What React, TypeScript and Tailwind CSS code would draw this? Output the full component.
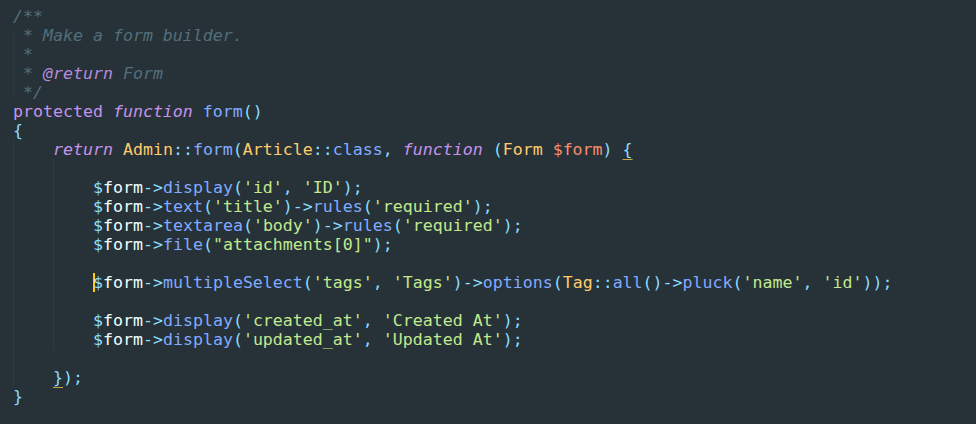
import React from "react";

type Tok = [string, string];

const P = "text-[#89DDFF]";
const K = "text-[#C792EA]";
const KI = "text-[#C792EA] italic";
const F = "text-[#82AAFF]";
const C = "text-[#FFCB6B]";
const S = "text-[#C3E88D]";
const V = "text-[#EEFFFF]";
const R = "text-[#F78C6C]";
const G = "text-[#546E7A] italic";
const N = "text-[#EEFFFF]";

function Guide() {
  return <span className="inline-block h-[19px] align-top w-[40px] border-l border-dotted border-[#33434b]" />;
}

function formCall(method: string, args: Tok[]): Tok[] {
  return [
    ["$", P],
    ["form", V],
    ["->", P],
    [method, F],
    ["(", P],
    ...args,
  ];
}

const Line = ({ guides = 0, children }: { guides?: number; children?: React.ReactNode }) => (
  <div className="h-[19px] whitespace-pre flex items-start">
    {Array.from({ length: guides }).map((_, i) => (
      <Guide key={i} />
    ))}
    <span className="leading-[19px]">{children}</span>
  </div>
);

const Toks = ({ toks }: { toks: Tok[] }) => (
  <>
    {toks.map(([t, c], i) => (
      <span key={i} className={c}>
        {t}
      </span>
    ))}
  </>
);

const CommentGuide = () => (
  <span className="inline-block h-[19px] w-[10px] border-l border-dotted border-[#2e3d45]" />
);

export default function App() {
  return (
    <div
      className="w-[976px] h-[424px] bg-[#263238] overflow-hidden pl-[13px] pt-[7px] text-[16.6px] leading-[19px]"
      style={{ fontFamily: '"DejaVu Sans Mono", monospace' }}
    >
      <Line>
        <span className={G}>/**</span>
      </Line>
      <div className="h-[19px] whitespace-pre flex">
        <CommentGuide />
        <span className={G}>* Make a form builder.</span>
      </div>
      <div className="h-[19px] whitespace-pre flex">
        <CommentGuide />
        <span className={G}>*</span>
      </div>
      <div className="h-[19px] whitespace-pre flex">
        <CommentGuide />
        <span className={G}>* </span>
        <span className="text-[#b48bdc] italic">@return</span>
        <span className={G}> Form</span>
      </div>
      <div className="h-[19px] whitespace-pre flex">
        <CommentGuide />
        <span className={G}>*/</span>
      </div>
      <Line>
        <Toks
          toks={[
            ["protected", K],
            [" ", N],
            ["function", KI],
            [" ", N],
            ["form", F],
            ["()", P],
          ]}
        />
      </Line>
      <Line>
        <span className={P}>{"{"}</span>
      </Line>
      <Line guides={1}>
        <Toks
          toks={[
            ["return", KI],
            [" ", N],
            ["Admin", C],
            ["::", P],
            ["form", F],
            ["(", P],
            ["Article", C],
            ["::", P],
            ["class", F],
            [",", P],
            [" ", N],
            ["function", KI],
            [" ", N],
            ["(", P],
            ["Form", C],
            [" ", N],
            ["$form", R],
            [")", P],
            [" ", N],
          ]}
        />
        <span className={P + " underline decoration-[#c9a23e] underline-offset-[4px]"}>{"{"}</span>
      </Line>
      <Line guides={2} />
      <Line guides={2}>
        <Toks toks={formCall("display", [["'id'", S], [",", P], [" ", N], ["'ID'", S], [");", P]])} />
      </Line>
      <Line guides={2}>
        <Toks
          toks={formCall("text", [
            ["'title'", S],
            [")->", P],
            ["rules", F],
            ["(", P],
            ["'required'", S],
            [");", P],
          ])}
        />
      </Line>
      <Line guides={2}>
        <Toks
          toks={formCall("textarea", [
            ["'body'", S],
            [")->", P],
            ["rules", F],
            ["(", P],
            ["'required'", S],
            [");", P],
          ])}
        />
      </Line>
      <Line guides={2}>
        <Toks toks={formCall("file", [['"attachments[0]"', S], [");", P]])} />
      </Line>
      <Line guides={2} />
      <Line guides={2}>
        <span className="inline-block w-[2px] h-[19px] align-top bg-[#FFCC00] mr-[-2px]" />
        <Toks
          toks={formCall("multipleSelect", [
            ["'tags'", S],
            [",", P],
            [" ", N],
            ["'Tags'", S],
            [")->", P],
            ["options", F],
            ["(", P],
            ["Tag", C],
            ["::", P],
            ["all", F],
            ["()->", P],
            ["pluck", F],
            ["(", P],
            ["'name'", S],
            [",", P],
            [" ", N],
            ["'id'", S],
            ["));", P],
          ])}
        />
      </Line>
      <Line guides={2} />
      <Line guides={2}>
        <Toks
          toks={formCall("display", [
            ["'created_at'", S],
            [",", P],
            [" ", N],
            ["'Created At'", S],
            [");", P],
          ])}
        />
      </Line>
      <Line guides={2}>
        <Toks
          toks={formCall("display", [
            ["'updated_at'", S],
            [",", P],
            [" ", N],
            ["'Updated At'", S],
            [");", P],
          ])}
        />
      </Line>
      <Line guides={1} />
      <Line guides={1}>
        <span className={P + " underline decoration-[#c9a23e] underline-offset-[4px]"}>{"}"}</span>
        <span className={P}>);</span>
      </Line>
      <Line>
        <span className={P}>{"}"}</span>
      </Line>
    </div>
  );
}
